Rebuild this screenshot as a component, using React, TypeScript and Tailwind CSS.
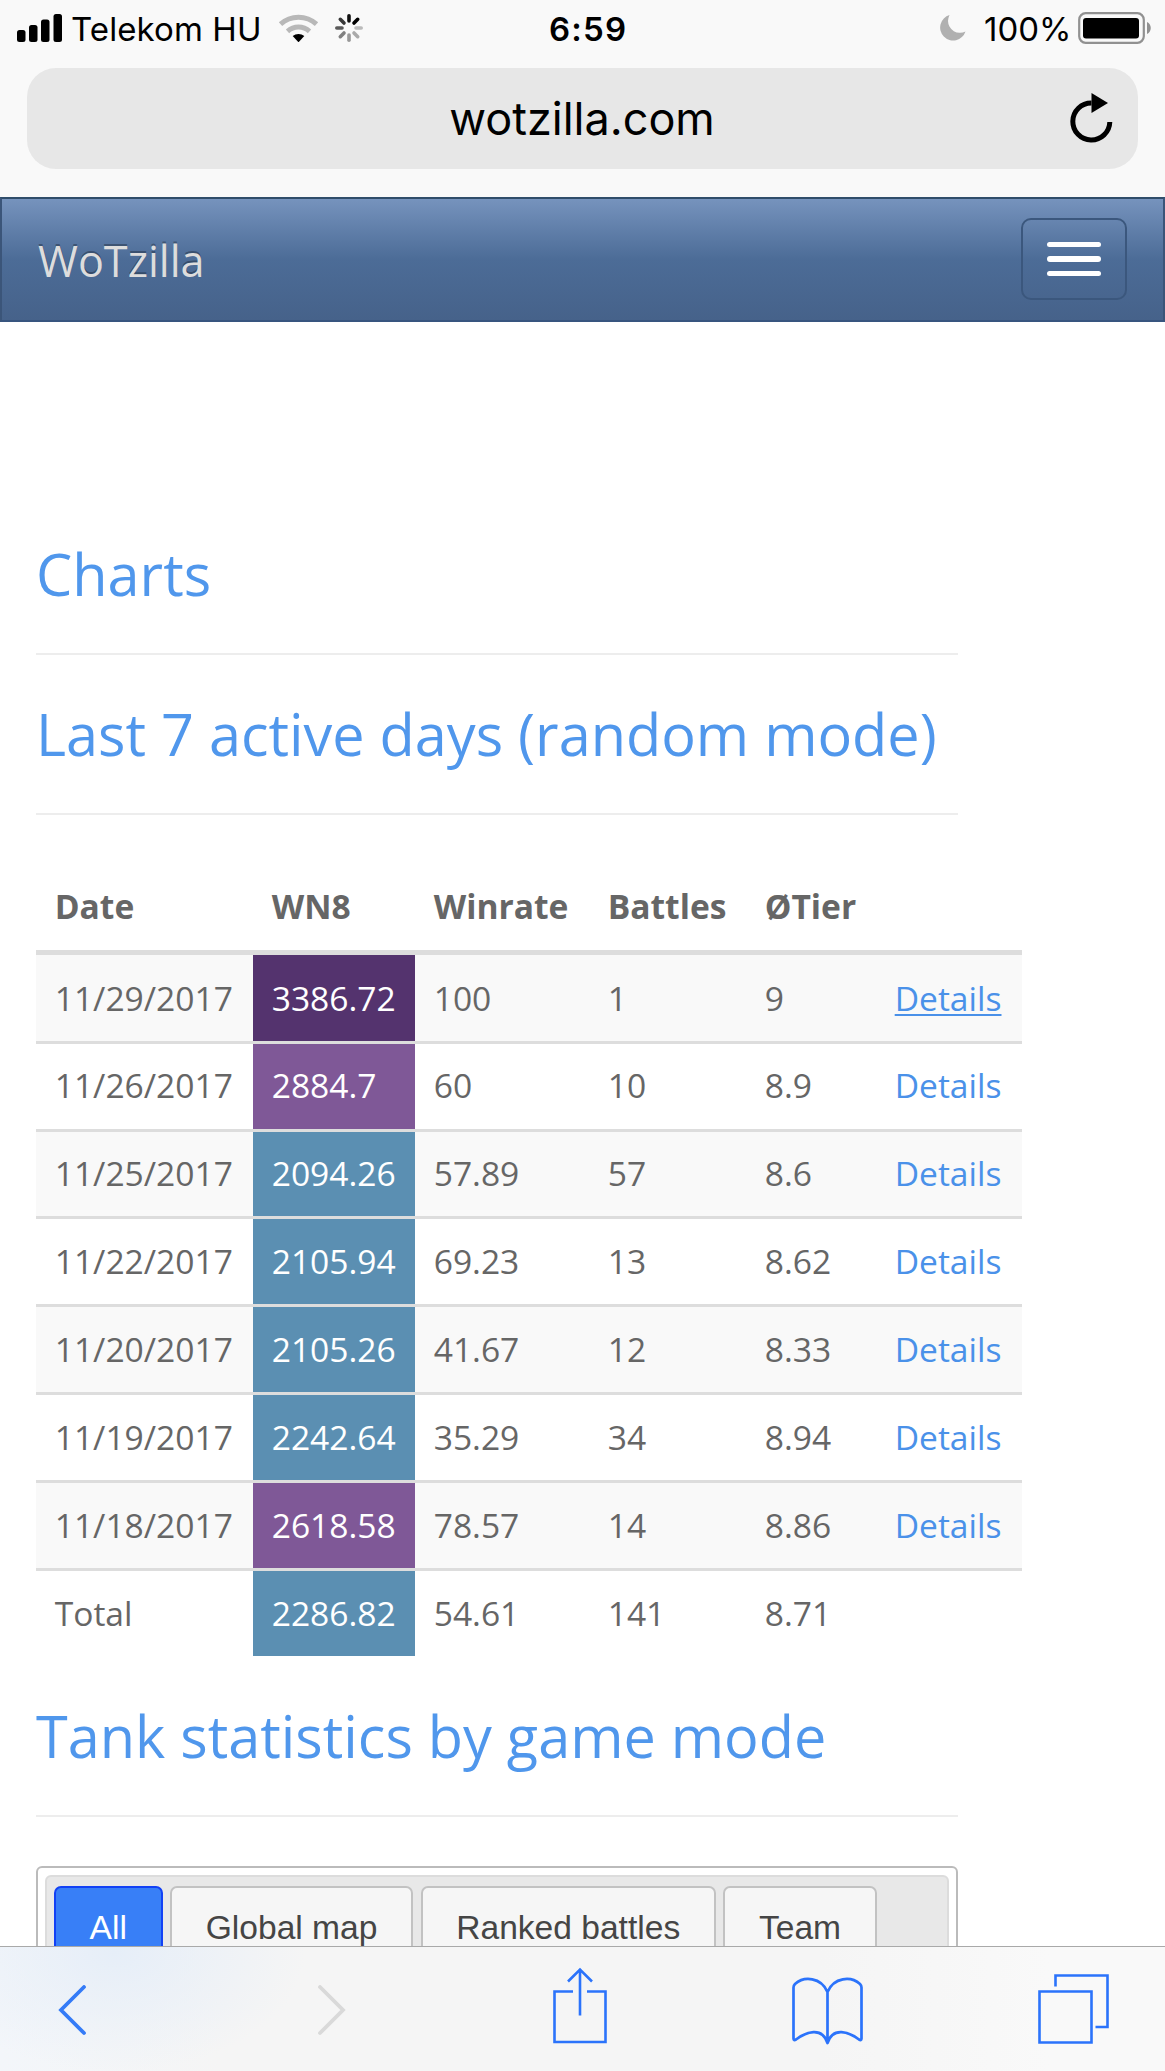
// App.tsx
type Day = {
  date: string;
  wn8: string;
  color: string;
  winrate: string;
  battles: string;
  tier: string;
};

const days: Day[] = [
  { date: "11/29/2017", wn8: "3386.72", color: "bg-[#54336e]", winrate: "100", battles: "1", tier: "9" },
  { date: "11/26/2017", wn8: "2884.7", color: "bg-[#7f5897]", winrate: "60", battles: "10", tier: "8.9" },
  { date: "11/25/2017", wn8: "2094.26", color: "bg-[#5b8fb2]", winrate: "57.89", battles: "57", tier: "8.6" },
  { date: "11/22/2017", wn8: "2105.94", color: "bg-[#5b8fb2]", winrate: "69.23", battles: "13", tier: "8.62" },
  { date: "11/20/2017", wn8: "2105.26", color: "bg-[#5b8fb2]", winrate: "41.67", battles: "12", tier: "8.33" },
  { date: "11/19/2017", wn8: "2242.64", color: "bg-[#5b8fb2]", winrate: "35.29", battles: "34", tier: "8.94" },
  { date: "11/18/2017", wn8: "2618.58", color: "bg-[#7f5897]", winrate: "78.57", battles: "14", tier: "8.86" },
  { date: "Total", wn8: "2286.82", color: "bg-[#5b8fb2]", winrate: "54.61", battles: "141", tier: "8.71" },
];

const tabs = ["All", "Global map", "Ranked battles", "Team"];

const StatusBar = () => {
  return (
    <div className="flex h-[68px] items-start text-[33px] leading-[40px] text-black">
      {/* signal */}
      <svg className="ml-[17px] mt-[14px] shrink-0" width="46" height="28" viewBox="0 0 46 28">
        <rect x="0" y="16" width="8.5" height="12" rx="2.5" />
        <rect x="12" y="11" width="8.5" height="17" rx="2.5" />
        <rect x="24" y="5.5" width="8.5" height="22.5" rx="2.5" />
        <rect x="36.5" y="0" width="8.5" height="28" rx="2.5" />
      </svg>
      <span className="ml-[8px] mt-[9px] w-[199px] whitespace-nowrap tracking-[0.1px]">Telekom HU</span>
      {/* wifi */}
      <svg className="ml-[8px] mt-[13px] shrink-0" width="42" height="30" viewBox="0 0 42 30" fill="none">
        <path d="M2.5 11.2a26.5 26.5 0 0 1 36 0" stroke="#b8b8b8" strokeWidth="5" />
        <path d="M9.5 18.3a16.5 16.5 0 0 1 22 0" stroke="#b8b8b8" strokeWidth="5" />
        <path d="M14.7 23a9 9 0 0 1 11.6 0L21 28.7a.8.8 0 0 1-1 0z" fill="#000" />
      </svg>
      {/* spinner */}
      <svg className="ml-[14px] mt-[13px] shrink-0" width="30" height="30" viewBox="-15 -15 30 30" strokeWidth="3.6" strokeLinecap="round">
        <path d="M0-7v-5.2" stroke="#111" />
        <path d="M5-5l3.7-3.7" stroke="#000" />
        <path d="M7 0h5.2" stroke="#bbb" />
        <path d="M5 5l3.7 3.7" stroke="#aaa" />
        <path d="M0 7v5.2" stroke="#999" />
        <path d="M-5 5l-3.7 3.7" stroke="#808080" />
        <path d="M-7 0h-5.2" stroke="#5a5a5a" />
        <path d="M-5-5l-3.7-3.7" stroke="#383838" />
      </svg>
      <span className="ml-[185px] mt-[9px] w-[80px] whitespace-nowrap font-semibold tracking-[1.2px]">6:59</span>
      {/* do not disturb */}
      <svg className="ml-auto mt-[14px] shrink-0" width="26" height="27" viewBox="0 0 26 27">
        <path d="M9.5 1A17 17 0 0 0 8 7a12 12 0 0 0 17.5 10.5A13 13 0 1 1 9.5 1z" fill="#b0b0b0" />
      </svg>
      <span className="ml-[18px] mt-[9px] w-[87px] whitespace-nowrap">100%</span>
      <svg className="ml-[7px] mr-[13px] mt-[12px] shrink-0" width="74" height="32" viewBox="0 0 74 32">
        <rect x="1.2" y="1.2" width="64.6" height="29.6" rx="6.5" fill="none" stroke="#919191" strokeWidth="2.2" />
        <rect x="5" y="6" width="56" height="20.5" rx="3" />
        <path d="M69 10v12c5-2 5-10 0-12z" fill="#919191" />
      </svg>
    </div>
  );
};

const AddressBar = () => {
  return (
    <div className="mx-[27px] flex h-[101px] items-center justify-between rounded-[29px] bg-[#e7e7e7] pl-[68px] pr-[25px]">
      <span className="flex-1 text-center text-[45px] leading-[56px] text-black">wotzilla.com</span>
      <svg className="shrink-0" width="44" height="52" viewBox="0 0 44 52">
        <path d="M22.5 10A18.5 18.5 0 1 0 40.8 29" fill="none" stroke="#000" strokeWidth="5" />
        <path d="M22.5 0V20L39 10z" />
      </svg>
    </div>
  );
};

const Navbar = () => {
  return (
    <nav className="flex h-[124.5px] items-start justify-between border-2 border-b-[#38557f] border-l-[#3b5579] border-r-[#3b5579] border-t-[#2f4d6a] bg-linear-to-b from-[#7693bd] via-[#4c6c97] via-50% to-[#46628a] px-[36px] font-['Open_Sans',sans-serif]">
      <span className="mt-[34px] text-[43.2px] leading-[56px] text-[#ddd] [text-shadow:0_-2.4px_0_rgba(0,0,0,0.3)]">
        WoTzilla
      </span>
      <button className="mt-[19px] flex h-[82px] w-[106px] flex-col items-center justify-center gap-[9px] rounded-[10px] border-[2.4px] border-[#3b577d]">
        <span className="h-[5.5px] w-[54px] rounded-full bg-white" />
        <span className="h-[5.5px] w-[54px] rounded-full bg-white" />
        <span className="h-[5.5px] w-[54px] rounded-full bg-white" />
      </button>
    </nav>
  );
};

const Heading = ({ title }: { title: string }) => {
  return (
    <>
      <h2 className="h-[64px] whitespace-nowrap text-[57.6px] leading-[64px] text-[#5097ec]">{title}</h2>
      <hr className="mt-[47px] w-[922px] border-t-2 border-[#ededed]" />
    </>
  );
};

const StatsTable = () => {
  return (
    <div className="w-[986px] text-[33.6px] leading-[48px] text-[#666]">
      <div className="grid h-[73px] grid-cols-[217px_162px_174px_157px_130px_146px] border-b-[5px] border-[#ddd] font-bold *:pl-[18.7px]">
        <span>Date</span>
        <span>WN8</span>
        <span>Winrate</span>
        <span>Battles</span>
        <span>ØTier</span>
      </div>
      {days.map((day, i) => (
        <div
          key={day.date}
          className={`grid grid-cols-[217px_162px_174px_157px_130px_146px] *:pl-[18.7px] ${
            i === 0 ? "h-[85.7px] *:pt-[19px]" : "h-[87.9px] border-t-[3px] border-[#ddd] *:pt-[17.5px]"
          } ${i % 2 === 0 ? "bg-[#f9f9f9]" : ""}`}
        >
          <span>{day.date}</span>
          <span className={`text-white ${day.color}`}>{day.wn8}</span>
          <span>{day.winrate}</span>
          <span>{day.battles}</span>
          <span>{day.tier}</span>
          {day.date !== "Total" && (
            <span>
              <a
                href="#"
                className={`text-[#4a91e9] ${i === 0 ? "underline decoration-[2.4px] underline-offset-[3px]" : ""}`}
              >
                Details
              </a>
            </span>
          )}
        </div>
      ))}
    </div>
  );
};

const Tabs = () => {
  return (
    <div className="mt-[49px] h-[200px] w-[922px] rounded-[6px] border-2 border-[#bbb] p-[7px] font-['Liberation_Sans',Arial,sans-serif]">
      <div className="flex h-[150px] gap-[7.6px] rounded-[6px] border-2 border-[#dcdcdc] bg-[#e8e8e8] pl-[7px] pt-[9px]">
        {tabs.map((tab, i) => (
          <button
            key={tab}
            className={`h-[100px] whitespace-nowrap rounded-t-[7px] border-2 px-[33.6px] pb-[16px] text-[33.6px] leading-none ${
              i === 0 ? "border-[#1241f5] bg-[#387ff7] text-white" : "border-[#c2c2c2] bg-[#f6f6f6] text-[#454545]"
            }`}
          >
            {tab}
          </button>
        ))}
      </div>
    </div>
  );
};

const Toolbar = () => {
  return (
    <div className="flex h-[125px] shrink-0 items-start border-t border-[#a9a9a9] bg-[#f5f5f5] bg-[radial-gradient(ellipse_190px_120px_at_115px_5px,#e6eef8,transparent),linear-gradient(to_right,#f3f6fa,#f5f5f5_220px,#f5f5f5_820px,#f9f9f9_1050px)]">
      <svg className="ml-[58px] mt-[38px] shrink-0" width="30" height="52" viewBox="0 0 30 52" fill="none" stroke="#347bf7" strokeWidth="3.8" strokeLinecap="round">
        <path d="M26 2L3 25L26 48" />
      </svg>
      <svg className="ml-[229px] mt-[38px] shrink-0" width="30" height="52" viewBox="0 0 30 52" fill="none" stroke="#d9d9d9" strokeWidth="3.8" strokeLinecap="round">
        <path d="M3 2L26 25L3 48" />
      </svg>
      {/* share */}
      <svg className="ml-[206px] mt-[19px] shrink-0" width="54" height="78" viewBox="0 0 54 78" fill="none" stroke="#2b73fb" strokeWidth="2.6">
        <path d="M20 25.5H1.5V76H52.5V25.5H34" />
        <path d="M27 49.5V4M15 15.5L27 3.5L39 15.5" />
      </svg>
      {/* bookmarks */}
      <svg className="ml-[185px] mt-[29px] shrink-0" width="72" height="70" viewBox="0 0 72 70" fill="none" stroke="#2b73fb" strokeWidth="2.7" strokeLinejoin="round">
        <path d="M35.5 16C29 1 12 0 3 8Q1.500 9.500 1.500 11.500V62.500Q1.500 65 4 63.500C14 56 30 50 35.500 67C41 50 57 56 67 63.500Q69.500 65 69.500 62.500V11.500Q69.500 9.500 68 8C59 0 42 1 35.500 16V67" />
      </svg>
      {/* open pages */}
      <svg className="ml-[174px] mt-[26px] shrink-0" width="72" height="72" viewBox="0 0 72 72" fill="none" stroke="#2b73fb" strokeWidth="2.6">
        <path d="M1.5 18.5H53.5V69.500H1.5zM17.5 13.5V2.5H69.5V54H57.5" />
      </svg>
    </div>
  );
};

const App = () => {
  return (
    <div className="flex h-[2071px] w-[1165px] flex-col overflow-hidden bg-white font-[Inter,sans-serif]">
      <header className="h-[197px] shrink-0 bg-[#f9f9f9]">
        <StatusBar />
        <AddressBar />
      </header>
      <main className="min-h-0 flex-1 overflow-hidden">
        <Navbar />
        <div className="pl-[36px] pt-[220px] font-['Open_Sans',sans-serif]">
          <Heading title="Charts" />
          <div className="h-[47.5px]" />
          <Heading title="Last 7 active days (random mode)" />
          <div className="h-[67px]" />
          <StatsTable />
          <div className="h-[48px]" />
          <Heading title="Tank statistics by game mode" />
          <Tabs />
        </div>
      </main>
      <Toolbar />
    </div>
  );
};

export default App;
